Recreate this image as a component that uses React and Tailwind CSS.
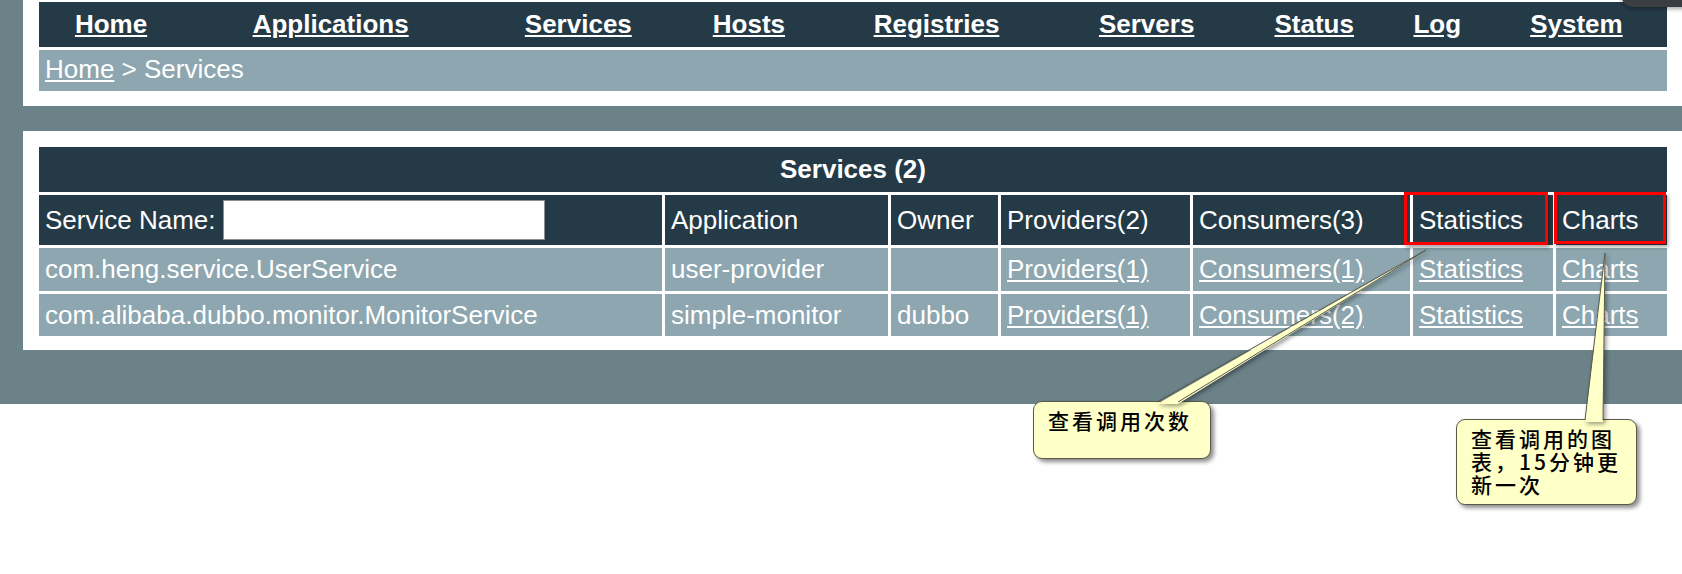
import React from 'react';

const navItems = [
  { label: 'Home', w: 'w-[144px]' },
  { label: 'Applications', w: 'w-[295px]' },
  { label: 'Services', w: 'w-[200px]' },
  { label: 'Hosts', w: 'w-[141px]' },
  { label: 'Registries', w: 'w-[234px]' },
  { label: 'Servers', w: 'w-[186px]' },
  { label: 'Status', w: 'w-[149px]' },
  { label: 'Log', w: 'w-[97px]' },
  { label: 'System', w: 'w-[181px]' },
];

const rows = [
  { name: 'com.heng.service.UserService', app: 'user-provider', owner: '', providers: 'Providers(1)', consumers: 'Consumers(1)' },
  { name: 'com.alibaba.dubbo.monitor.MonitorService', app: 'simple-monitor', owner: 'dubbo', providers: 'Providers(1)', consumers: 'Consumers(2)' },
];

const cell = 'bg-[#253a47] text-white pl-[6px] flex items-center';
const rowCell = 'bg-[#8da6af] text-white pl-[6px] flex items-center';

const App = () => {
  return (
    <div className="relative min-h-screen bg-white overflow-hidden font-['Liberation_Sans',Arial,sans-serif] text-[26px]">
      <div className="bg-[#6b8289] pl-[23px] pb-[54px]">
        {/* top menu */}
        <div className="bg-white pl-4 pr-[15px] pt-[2px] pb-[15px]">
          <table className="w-full table-fixed border-collapse bg-[#253a47]">
            <tbody>
              <tr className="h-[45px]">
                {navItems.map(item => (
                  <td key={item.label} className={`${item.w} text-center p-0`}>
                    <a href="#" className="font-bold text-white underline">{item.label}</a>
                  </td>
                ))}
              </tr>
            </tbody>
          </table>
          <div className="mt-[3px] h-[41px] bg-[#8da6af] text-white pl-[6px] flex items-center pb-[3px]">
            <a href="#" className="underline">Home</a>
            <span>&nbsp;&gt; Services</span>
          </div>
        </div>

        {/* services table */}
        <div className="mt-[25px] bg-white pl-4 pr-[15px] pt-4 pb-[14px]">
          <div className="grid grid-cols-[623px_223px_107px_189px_217px_140px_111px] gap-[3px]">
            <div className="col-span-7 h-[45px] bg-[#253a47] text-white font-bold flex items-center justify-center">Services (2)</div>

            <div className={`${cell} h-[50px]`}>
              <span>Service Name:&nbsp;</span>
              <input type="text" className="w-[322px] h-[40px] bg-white border border-[#8a8f92] outline-none" />
            </div>
            <div className={cell}>Application</div>
            <div className={cell}>Owner</div>
            <div className={cell}>Providers(2)</div>
            <div className={cell}>Consumers(3)</div>
            <div className={cell}>Statistics</div>
            <div className={cell}>Charts</div>

            {rows.map((r, i) => (
              <React.Fragment key={r.name}>
                <div className={`${rowCell} ${i === 0 ? 'h-[43px]' : 'h-[42px]'}`}>{r.name}</div>
                <div className={rowCell}>{r.app}</div>
                <div className={rowCell}>{r.owner}</div>
                <div className={rowCell}><a href="#" className="underline">{r.providers}</a></div>
                <div className={rowCell}><a href="#" className="underline">{r.consumers}</a></div>
                <div className={rowCell}><a href="#" className="underline">Statistics</a></div>
                <div className={rowCell}><a href="#" className="underline">Charts</a></div>
              </React.Fragment>
            ))}
          </div>
        </div>
      </div>

      {/* red highlight boxes */}
      <div className="absolute left-[1404px] top-[192px] w-[144px] h-[53px] border-[3px] border-[#ff0000] shadow-[2px_3px_4px_rgba(0,0,0,0.35)]" />
      <div className="absolute left-[1554px] top-[192px] w-[112px] h-[52px] border-[3px] border-[#ff0000] shadow-[2px_3px_4px_rgba(0,0,0,0.35)]" />

      {/* callouts */}
      <div className="absolute left-[1033px] top-[401px] w-[178px] h-[58px] rounded-[9px] border border-[#5a5a4a] bg-[#ffffc8] shadow-[3px_3px_4px_rgba(0,0,0,0.45)] pl-[14px] pt-[6px] font-['Noto_Sans_CJK_SC',sans-serif] font-medium text-[21px] leading-[24px] tracking-[3px] text-black">
        查看调用次数
      </div>
      <div className="absolute left-[1456px] top-[419px] w-[181px] h-[86px] rounded-[9px] border border-[#5a5a4a] bg-[#ffffc8] shadow-[3px_3px_4px_rgba(0,0,0,0.45)] pl-[14px] pt-[7px] font-['Noto_Sans_CJK_SC',sans-serif] font-medium text-[21px] leading-[23px] tracking-[3px] text-black whitespace-nowrap">
        <div>查看调用的图</div>
        <div>表，15分钟更</div>
        <div>新一次</div>
      </div>

      <svg className="absolute left-0 top-0 pointer-events-none drop-shadow-[2px_2px_2px_rgba(0,0,0,0.4)]" width="1682" height="574">
        <polygon points="1426,250 1157,404 1178,404" fill="#ffffc8" />
        <path d="M1157,402 L1426,250 L1178,402" fill="none" stroke="#5a5a4a" strokeWidth="1" />
        <polygon points="1605,253 1585,422 1603,422" fill="#ffffc8" />
        <path d="M1585,420 L1605,253 L1603,420" fill="none" stroke="#5a5a4a" strokeWidth="1" />
      </svg>

      {/* floating toolbar edge at top right */}
      <div className="absolute left-[1622px] top-[-14px] w-[80px] h-[21px] rounded-[10px] bg-[#3a3e43] shadow-[0_2px_4px_rgba(0,0,0,0.35)]" />
    </div>
  );
};

export default App;
